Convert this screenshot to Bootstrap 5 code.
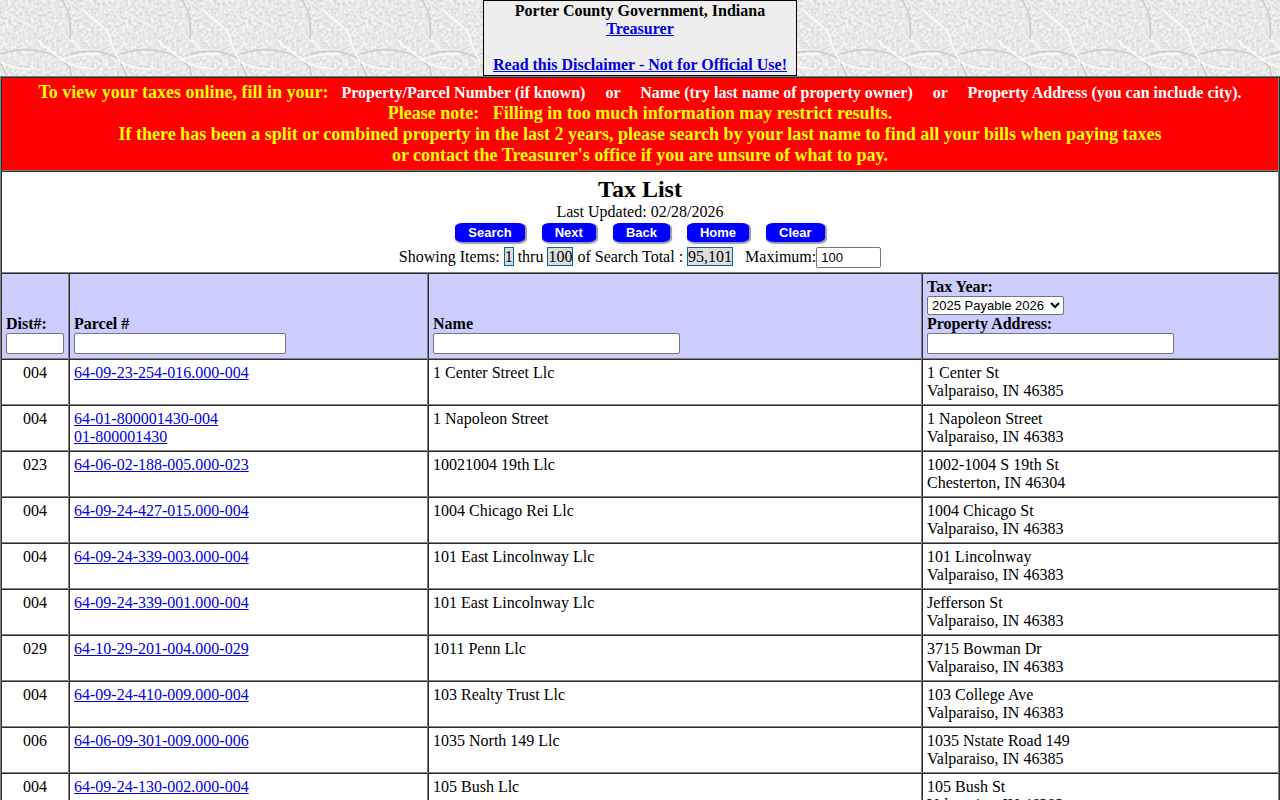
<!DOCTYPE html>
<html lang="en">
<head>
<meta charset="utf-8">
<meta name="viewport" content="width=device-width, initial-scale=1">
<title>Tax List</title>
<link href="https://cdn.jsdelivr.net/npm/bootstrap@5.3.0/dist/css/bootstrap.min.css" rel="stylesheet">
<style>
body{font-family:"Liberation Serif",serif;font-size:16px;line-height:18px;color:#000;
background:#e9e9e9 url("data:image/svg+xml,%3Csvg xmlns='http://www.w3.org/2000/svg' width='120' height='120'%3E%3Cfilter id='n' x='0' y='0' width='100%25' height='100%25' color-interpolation-filters='sRGB'%3E%3CfeTurbulence type='fractalNoise' baseFrequency='.35' numOctaves='2' seed='4' stitchTiles='stitch'/%3E%3CfeColorMatrix values='.24 0 0 0 .79 .24 0 0 0 .79 .24 0 0 0 .79 0 0 0 0 1'/%3E%3C/filter%3E%3Crect width='120' height='120' filter='url(%23n)'/%3E%3Cg fill='none' stroke='%23c8c8c8' stroke-width='1.4'%3E%3Cpath d='M62 0C68 10 72 20 70 38M0 54C22 47 45 49 60 59S68 70 72 76M70 54C90 49 105 50 120 60M0 62L7 76'/%3E%3C/g%3E%3Cg fill='none' stroke='%23fafafa' stroke-width='1.6'%3E%3Cpath d='M82 9L108 32L114 50L120 62M38 41L62 60Q76 68 94 69M0 62Q16 70 34 69M60 60Q80 53 100 54M71 40L80 48'/%3E%3C/g%3E%3C/svg%3E")}
a{color:#0000e0}
.masthead{background:#eee;border:1px solid #000;padding:1px 9px 0;height:76px}
.frame{border:1px solid;border-color:#808080 #2c2c2c #2c2c2c #808080}
.taxes{table-layout:fixed;border-collapse:separate;border-spacing:0;background:#fff}
.taxes th,.taxes td{border:1px solid;border-color:#2c2c2c #808080 #808080 #2c2c2c;padding:4px;vertical-align:top}
.taxes .notice{background:#f00;color:#ff0;font-size:18px;line-height:21px}
.taxes .notice span{color:#fff;font-size:16px}
.taxes .filters th{background:#ccf;vertical-align:bottom}
.c-dist{width:68px}.c-parcel{width:359px}.c-name{width:494px}
h1{font-size:24px;line-height:27px}
.field,.pick{font:13px/16px "Liberation Sans",sans-serif;border:1px solid #767676;border-radius:2px;color:#000;background:#fff}
.field{padding:1px 4px;height:21px}
.pick{height:19px;width:137px}
.w-max{width:65px}.w-parcel{width:212px}.w-long{width:247px}
.commands{gap:17px;padding:2px 0 5px}
.cmd{font:bold 13px/16px "Liberation Sans",sans-serif;color:#fff;background:#00f;border:0;border-radius:8px/4px;box-shadow:1px 1px 1px 1px #99a;height:19px;padding:0 13px}
.count{background:#ddd;border:1px solid #069}
</style>
</head>
<body>
<header class="d-flex justify-content-center">
<div class="masthead text-center fw-bold">Porter County Government, Indiana<br><a href="#">Treasurer</a><br><br><a href="#">Read this Disclaimer - Not for Official Use!</a></div>
</header>
<main class="frame">
<table class="taxes w-100">
<colgroup><col class="c-dist"><col class="c-parcel"><col class="c-name"><col></colgroup>
<thead>
<tr><th colspan="4" class="notice text-center">To view your taxes online, fill in your: &nbsp;<span> Property/Parcel Number (if known) &nbsp; &nbsp; or &nbsp; &nbsp; Name (try last name of property owner) &nbsp; &nbsp; or &nbsp; &nbsp; Property Address (you can include city).</span><br>Please note: &nbsp; Filling in too much information may restrict results.<br>If there has been a split or combined property in the last 2 years, please search by your last name to find all your bills when paying taxes<br>or contact the Treasurer's office if you are unsure of what to pay.</th></tr>
<tr><td colspan="4" class="text-center">
<h1 class="fw-bold m-0">Tax List</h1>
<div>Last Updated: 02/28/2026</div>
<div class="commands d-flex justify-content-center"><button type="button" class="cmd">Search</button><button type="button" class="cmd">Next</button><button type="button" class="cmd">Back</button><button type="button" class="cmd">Home</button><button type="button" class="cmd">Clear</button></div>
<div>Showing Items: <span class="count">1</span> thru <span class="count">100</span> of Search Total : <span class="count">95,101</span> &nbsp; <label for="max">Maximum:</label><input id="max" class="field w-max" value="100"></div>
</td></tr>
<tr class="filters">
<th><label for="dist">Dist#:</label><input id="dist" class="field w-100 d-block"></th>
<th><label for="parcel">Parcel #</label><input id="parcel" class="field w-parcel d-block"></th>
<th><label for="owner">Name</label><input id="owner" class="field w-long d-block"></th>
<th><label for="year" class="d-block">Tax Year:</label><select id="year" class="pick d-block"><option>2025 Payable 2026</option></select><label for="addr">Property Address:</label><input id="addr" class="field w-long d-block"></th>
</tr>
</thead>
<tbody>
<tr><td class="text-center">004</td><td><a href="#">64-09-23-254-016.000-004</a></td><td>1 Center Street Llc</td><td>1 Center St<br>Valparaiso, IN 46385</td></tr>
<tr><td class="text-center">004</td><td><a href="#">64-01-800001430-004</a><br><a href="#">01-800001430</a></td><td>1 Napoleon Street</td><td>1 Napoleon Street<br>Valparaiso, IN 46383</td></tr>
<tr><td class="text-center">023</td><td><a href="#">64-06-02-188-005.000-023</a></td><td>10021004 19th Llc</td><td>1002-1004 S 19th St<br>Chesterton, IN 46304</td></tr>
<tr><td class="text-center">004</td><td><a href="#">64-09-24-427-015.000-004</a></td><td>1004 Chicago Rei Llc</td><td>1004 Chicago St<br>Valparaiso, IN 46383</td></tr>
<tr><td class="text-center">004</td><td><a href="#">64-09-24-339-003.000-004</a></td><td>101 East Lincolnway Llc</td><td>101 Lincolnway<br>Valparaiso, IN 46383</td></tr>
<tr><td class="text-center">004</td><td><a href="#">64-09-24-339-001.000-004</a></td><td>101 East Lincolnway Llc</td><td>Jefferson St<br>Valparaiso, IN 46383</td></tr>
<tr><td class="text-center">029</td><td><a href="#">64-10-29-201-004.000-029</a></td><td>1011 Penn Llc</td><td>3715 Bowman Dr<br>Valparaiso, IN 46383</td></tr>
<tr><td class="text-center">004</td><td><a href="#">64-09-24-410-009.000-004</a></td><td>103 Realty Trust Llc</td><td>103 College Ave<br>Valparaiso, IN 46383</td></tr>
<tr><td class="text-center">006</td><td><a href="#">64-06-09-301-009.000-006</a></td><td>1035 North 149 Llc</td><td>1035 Nstate Road 149<br>Valparaiso, IN 46385</td></tr>
<tr><td class="text-center">004</td><td><a href="#">64-09-24-130-002.000-004</a></td><td>105 Bush Llc</td><td>105 Bush St<br>Valparaiso, IN 46383</td></tr>
</tbody>
</table>
</main>
<script src="https://cdn.jsdelivr.net/npm/bootstrap@5.3.0/dist/js/bootstrap.bundle.min.js"></script>
</body>
</html>
